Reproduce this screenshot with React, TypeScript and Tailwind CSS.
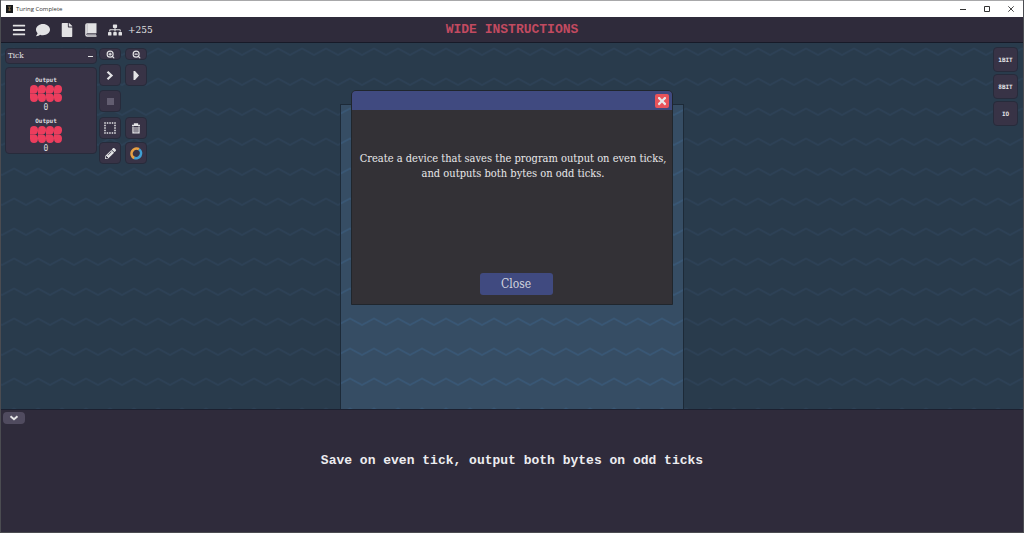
import type { ButtonHTMLAttributes, ReactNode } from "react";
import { FaBars, FaComment, FaFile, FaPencilAlt, FaSitemap, FaTimes } from "react-icons/fa";
import { FiZoomIn, FiZoomOut } from "react-icons/fi";

const slab = "font-['DejaVu_Serif_Condensed','DejaVu_Serif',serif]";
const mono = "font-['Liberation_Mono',monospace]";
const monoSmall = "font-['DejaVu_Sans_Mono',monospace]";

function Waves({ id, x, y, color }: { id: string; x: number; y: number; color: string }) {
  return (
    <svg className="absolute inset-0 h-full w-full" aria-hidden="true">
      <defs>
        <pattern id={id} x={x} y={y} width="24" height="30" patternUnits="userSpaceOnUse">
          <path d="M-2 7 0 8 12 1.500 24 8 26 7" fill="none" stroke={color} strokeWidth="1.800" />
        </pattern>
      </defs>
      <rect width="100%" height="100%" fill={`url(#${id})`} />
    </svg>
  );
}

function Tool({ label, short, children, ...rest }: { label: string; short?: boolean; children: ReactNode } & ButtonHTMLAttributes<HTMLButtonElement>) {
  return (
    <button
      type="button"
      aria-label={label}
      className={`flex w-[22px] items-center justify-center rounded-[4px] border border-[#272b3b] bg-[#383346] text-[#e4e4e6] ${short ? "h-3" : "h-[22px]"}`}
      {...rest}
    >
      {children}
    </button>
  );
}

function OutputPort({ value }: { value: number }) {
  return (
    <div className={`flex flex-col items-center ${monoSmall} text-[#dadade]`}>
      <span className="text-[6px] leading-[8px] font-bold">Output</span>
      <svg width="32" height="17" viewBox="0 0 32 17" fill="#ec3d5d" className="mt-px" aria-hidden="true">
        {[0, 8, 16, 24].map((x) => (
          <g key={x} transform={`translate(${x} 0)`}>
            <path d="M0 4.200A4 4.200 0 1 1 4 8.400H0Z" />
            <path d="M0 12.800A4 4.200 0 1 0 4 8.600H0Z" />
          </g>
        ))}
      </svg>
      <span className="mt-px text-[8px] leading-[10px]">{value}</span>
    </div>
  );
}

function TitleBar() {
  return (
    <header className="flex h-[17px] items-center justify-between border-t border-[#a8a8aa] bg-white pr-[9px] pl-[5px] text-[#333]">
      <div className="flex items-center gap-[3px]">
        <svg width="7" height="8" viewBox="0 0 7 8" aria-hidden="true">
          <path d="M0 0h7v8H0z" fill="#17191b" />
          <path d="M2 2h3M3.500 2v4M2 5h3" stroke="#76613f" fill="none" />
        </svg>
        <h1 className="font-['Open_Sans',sans-serif] text-[6px] leading-[10px]">Turing Complete</h1>
      </div>
      <div className="flex items-center gap-[18px]">
        <button type="button" aria-label="Minimize">
          <svg width="6" height="6" viewBox="0 0 6 6"><path d="M0 3.500h6" stroke="#333" /></svg>
        </button>
        <button type="button" aria-label="Maximize">
          <svg width="6" height="6" viewBox="0 0 6 6"><path d="M.5.5h5v5h-5z" stroke="#333" fill="none" /></svg>
        </button>
        <button type="button" aria-label="Close window">
          <svg width="6" height="6" viewBox="0 0 6 6"><path d="m.3.3 5.400 5.400m0-5.400L.3 5.700" stroke="#333" strokeWidth=".9" /></svg>
        </button>
      </div>
    </header>
  );
}

function MenuBar() {
  return (
    <nav className="relative flex h-[26px] items-center gap-[10px] border-b border-[#171a28] bg-[#2f2b3b] pt-px pl-[11px] text-[#e2e2e4]">
      <button type="button" aria-label="Menu"><FaBars size={14} /></button>
      <button type="button" aria-label="Chat"><FaComment size={14} /></button>
      <button type="button" aria-label="File"><FaFile size={14} /></button>
      <button type="button" aria-label="Manual">
        <svg width="14" height="14" viewBox="0 0 14 14" aria-hidden="true">
          <path d="M3 .3h9.500v10H3.400a1 1 0 0 0 0 2h9.100v1.400H3.200A2 2 0 0 1 1.200 11.700V2A1.800 1.800 0 0 1 3 .3Z" fill="currentColor" />
          <path d="M3.400 10.800h8.600v1.200H3.400a.6.600 0 0 1 0-1.200Z" fill="#8d8b95" />
          <path d="M3.200 1v8.800" stroke="#a5a3ab" strokeWidth=".6" />
        </svg>
      </button>
      <button type="button" aria-label="Components"><FaSitemap size={14} /></button>
      <span className={`-ml-1 text-[10px] leading-[14px] ${slab}`}>+255</span>
      <h2 className={`pointer-events-none absolute inset-x-0 text-center text-[13px] leading-[16px] font-bold text-[#c24a60] ${mono}`}>
        WIDE INSTRUCTIONS
      </h2>
    </nav>
  );
}

function SidePanel() {
  return (
    <div className="flex w-[92px] flex-col gap-[3px]">
      <button type="button" className={`flex h-4 items-center justify-between rounded-[4px] border border-[#272b3b] bg-[#383346] px-[2px] text-[8px] text-[#e4e4e6] ${slab}`}>
        Tick
        <span className="mr-px h-px w-[5px] bg-[#e4e4e6]" />
      </button>
      <div className="flex h-[87px] flex-col items-center gap-1 rounded-[4px] border border-[#272b3b] bg-[#383346] pt-2 pr-[10px]">
        <OutputPort value={0} />
        <OutputPort value={0} />
      </div>
    </div>
  );
}

function Tools() {
  return (
    <div className="flex flex-col gap-[5px]">
      <div className="grid grid-cols-2 gap-1">
        <Tool label="Zoom in" short><FiZoomIn size={9} strokeWidth={3} /></Tool>
        <Tool label="Zoom out" short><FiZoomOut size={9} strokeWidth={3} /></Tool>
        <Tool label="Step">
          <svg width="8" height="9" viewBox="0 0 8 9"><path d="M1.500.8 5.500 4.500l-4 3.700" fill="none" stroke="currentColor" strokeWidth="2.200" /></svg>
        </Tool>
        <Tool label="Run">
          <svg width="8" height="9" viewBox="0 0 8 9"><path d="M1.500 0H3l4 4.500-4 4.500H1.500Z" fill="currentColor" /></svg>
        </Tool>
        <Tool label="Stop" disabled><span className="size-[7px] bg-[#625d70]" /></Tool>
      </div>
      <div className="grid grid-cols-2 gap-x-1 gap-y-[3px]">
        <Tool label="Select area">
          <svg width="12" height="12" viewBox="0 0 12 12"><path d="M1 1h10v10H1z" fill="none" stroke="currentColor" strokeWidth="1.500" strokeDasharray="1.500 1" strokeDashoffset=".7" /></svg>
        </Tool>
        <Tool label="Delete">
          <svg width="10" height="11" viewBox="0 0 10 11" fill="none" stroke="currentColor"><path d="M1 2.300h8M3.500 2V1h3v1M2 3.500v6.300h6V3.500" strokeWidth="1.300" /><path d="M4 4v5M6 4v5" strokeWidth="1" /></svg>
        </Tool>
        <Tool label="Draw"><FaPencilAlt size={11} /></Tool>
        <Tool label="Colour">
          <svg width="13" height="13" viewBox="0 0 13 13" fill="none" strokeWidth="2.600">
            <path d="M9 2.200A5 5 0 0 1 4 10.800" stroke="#3f9fd4" />
            <path d="M4.200 11A5 5 0 0 1 9 2.200" stroke="#e7a044" />
          </svg>
        </Tool>
      </div>
    </div>
  );
}

function Dialog() {
  return (
    <section role="dialog" aria-label="Level description" className="absolute top-[47px] left-1/2 flex min-h-[215px] w-[322px] -translate-x-1/2 flex-col overflow-hidden rounded-t-[5px] border border-[#20262d] bg-[#333136] text-[#e8e8ea]">
      <div className="flex h-[19px] items-center justify-end bg-[#404a80] pr-[3px]">
        <button type="button" aria-label="Dismiss" className="flex size-[14px] items-center justify-center rounded-[2px] bg-[#e9535a]">
          <FaTimes size={12} />
        </button>
      </div>
      <p className={`mt-[41px] ml-[2px] text-center text-[11px] leading-[15px] whitespace-nowrap ${slab}`}>
        Create a device that saves the program output on even ticks,
        <br />
        and outputs both bytes on odd ticks.
      </p>
      <button type="button" className={`mt-auto mb-[9px] ml-2 h-[22px] w-[73px] self-center rounded-[3px] bg-[#404a80] text-[12px] leading-[16px] text-[#d2d4de] ${slab}`}>
        Close
      </button>
    </section>
  );
}

export default function App() {
  return (
    <div className="flex min-h-screen flex-col border-x border-b border-[#4b4c51] bg-[#2f2b3b]">
      <TitleBar />
      <MenuBar />
      <main className="relative flex flex-1 justify-between bg-[#293b4c] pt-1 pr-[5px] pl-1">
        <Waves id="waves" x={1} y={4} color="#2d4156" />
        <div className="absolute inset-x-0 top-[61px] bottom-0 mx-auto w-[344px] border-x border-t border-[#1d2a38] bg-[#364d64]">
          <Waves id="board-waves" x={-3} y={2} color="#395775" />
        </div>
        <div className="relative flex gap-[2px] pt-px">
          <SidePanel />
          <Tools />
        </div>
        <div className="relative flex flex-col gap-[2px]">
          {["1BIT", "8BIT", "IO"].map((name) => (
            <button key={name} type="button" className={`size-[25px] rounded-[4px] border border-[#272b3b] bg-[#383346] text-[6px] font-bold text-[#e4e4e6] ${monoSmall}`}>
              {name}
            </button>
          ))}
        </div>
        <Dialog />
      </main>
      <footer className="h-[123px] border-t border-[#1c2030]">
        <button type="button" aria-label="Collapse" className="mt-[2px] ml-[2px] flex h-3 w-[22px] items-center justify-center rounded-[4px] bg-[#504b5f] text-[#e4e4e6]">
          <svg width="10" height="7" viewBox="0 0 10 7"><path d="m1.500 1.200 3.500 3 3.500-3" fill="none" stroke="currentColor" strokeWidth="2" /></svg>
        </button>
        <p className={`mt-[28px] text-center text-[13px] leading-[18px] font-bold text-[#ededf0] ${mono}`}>
          Save on even tick, output both bytes on odd ticks
        </p>
      </footer>
    </div>
  );
}
